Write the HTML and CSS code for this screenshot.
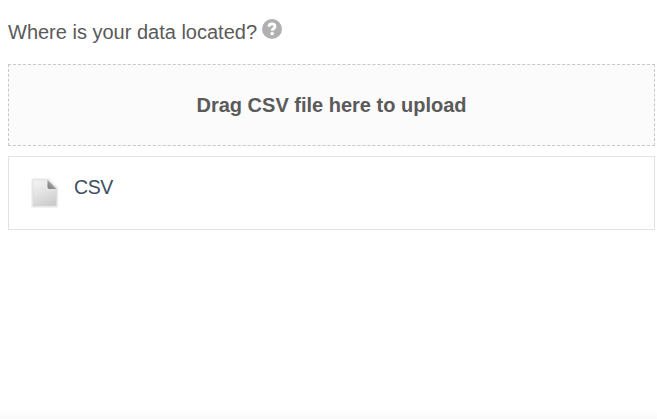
FILE: index.html
```html
<!DOCTYPE html>
<html lang="en">
<head>
<meta charset="utf-8">
<title>Data location</title>
<link rel="stylesheet" href="styles.css">
</head>
<body>
<main class="panel">
  <div class="question">
    <span class="question-text">Where is your data located?</span>
    <svg class="help" viewBox="0 0 20 20" aria-hidden="true"><circle cx="10" cy="10" r="10" fill="#b0b0b0"/><path d="M7 7.8C7 3.9 13 4.1 13 7.4c0 2.1-2.8 2.1-2.8 4.4" fill="none" stroke="#fff" stroke-width="2.9"/><rect x="8.6" y="13.2" width="3.1" height="2.9" fill="#fff"/></svg>
  </div>
  <div class="dropzone">Drag CSV file here to upload</div>
  <div class="source">
    <svg class="file" viewBox="0 0 28 32" aria-hidden="true">
      <defs>
        <linearGradient id="paper" x1="0.2" y1="0" x2="0.6" y2="1"><stop offset="0" stop-color="#f3f3f3"/><stop offset="0.5" stop-color="#e2e2e2"/><stop offset="1" stop-color="#cccccc"/></linearGradient>
        <linearGradient id="fold" x1="0" y1="1" x2="0.65" y2="0.35"><stop offset="0" stop-color="#777"/><stop offset="1" stop-color="#aaa"/></linearGradient>
      </defs>
      <path d="M2 1.5h15.5l8.5 8.5v18.5H1.5V2z" fill="none" stroke="#eee" stroke-width="2.5" stroke-linejoin="round"/>
      <path d="M2 2h15l8.5 8.5V28H2z" fill="url(#paper)" stroke="#d8d8d8" stroke-width="0.7"/>
      <path d="M16.5 2l9 9h-6.5q-2.5 0-2.5-2.5z" fill="url(#fold)"/>
    </svg>
    <span class="source-name">CSV</span>
  </div>
</main>
</body>
</html>
```
FILE: styles.css
```css
* { box-sizing: border-box; }
body { margin: 0; background: #fff; font-family: "Liberation Sans", Arial, sans-serif; }
.panel { height: 419px; padding: 19px 2px 0 8px; background: linear-gradient(#fff, #f9f9f9) bottom / 100% 8px no-repeat; }
.question { display: flex; height: 45px; align-items: flex-start; gap: 5px; color: #5a5a5a; font-size: 20px; line-height: 25px; }
.question-text { padding-top: 1px; }
.help { width: 20px; height: 20px; }
.dropzone { height: 82px; margin-bottom: 10px; border: 1px dashed #c8c8c8; background: #fbfbfb; color: #5a5a5a; font-size: 20px; font-weight: 700; line-height: 80px; text-align: center; }
.source { display: flex; height: 74px; padding: 20px 22px; gap: 15px; border: 1px solid #e3e3e3; color: #3d4f60; font-size: 19.5px; letter-spacing: -0.4px; line-height: 22px; }
.file { width: 28px; height: 32px; margin-top: 1px; }
.source-name { margin-top: -1px; }
```
